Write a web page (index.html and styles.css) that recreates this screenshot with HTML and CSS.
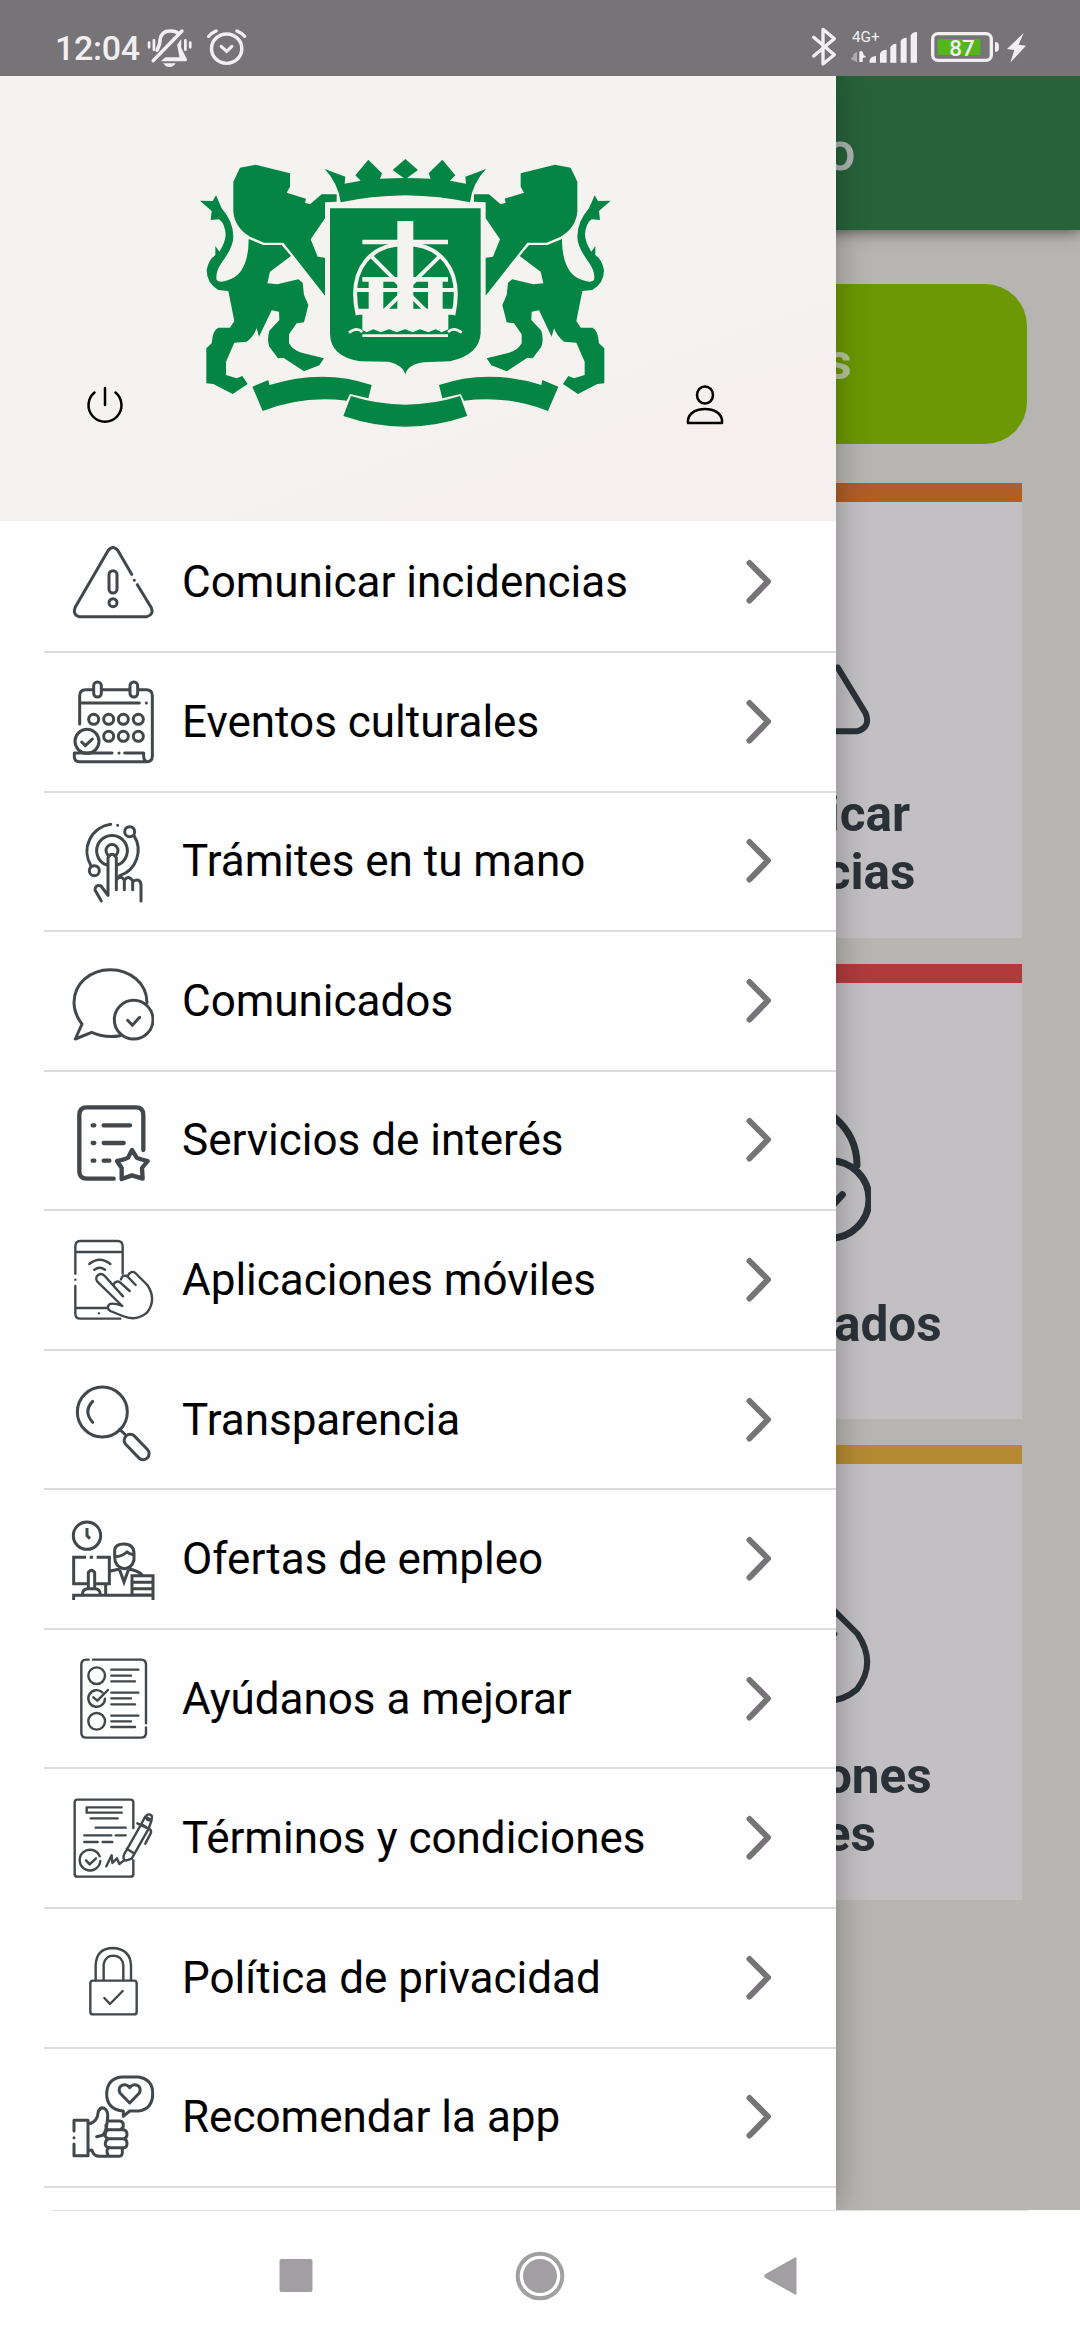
FILE: index.html
```html
<!DOCTYPE html>
<html lang="es">
<head>
<meta charset="utf-8">
<title>Menú</title>
<link rel="stylesheet" href="styles.css">
</head>
<body>
<svg class="defs" aria-hidden="true">
  <symbol id="i-warn" viewBox="95 63 246 246"><path d="M274 163L233 92Q218 73 203 92L105 261Q96 284 116 290H320Q341 284 333 263L291 194M282 181h.1"/><rect x="206" y="152" width="24" height="67" rx="12"/><circle cx="218" cy="248" r="12"/></symbol>
  <symbol id="i-chat" viewBox="95 118 246 246"><path d="M320 246C320 188 269 147 210 147S101 188 101 246Q102 281 125 310L105 355 154 335Q194 353 239 345"/><circle cx="280" cy="297" r="58"/><path d="M262 299l14 15 22-24"/></symbol>
  <symbol id="i-touch" viewBox="95 956 246 246"><path d="M105 1060V978Q105 962 120 962H232Q247 962 247 978V1060M105 995H247M105 1078h.1M105 1097V1180Q105 1195 120 1195H240M105 1163H200M176 1179h.1M147 1031Q178 1005 210 1031M162 1048Q178 1036 194 1048"/><path d="M246 1157L171 1084C160 1067 181 1053 194 1068L248 1128M220 1094L223 1087Q231 1080 240 1087L268 1112M242 1077Q246 1062 260 1067L286 1094M263 1065Q272 1049 285 1058L321 1094Q350 1138 320 1177Q288 1204 247 1187L210 1172Q197 1164 206 1153Q215 1145 246 1157"/></symbol>
</svg>
<div class="phone">
  <header class="status">
    <span class="clock">12:04</span>
    <svg class="st-bell" viewBox="428 80 133 126" preserveAspectRatio="none"><path d="M457 150Q466 132 466 117Q470 92 494 92Q511 91 519 100M446 181L529 92" fill="none" stroke="#f1eff1" stroke-width="10" stroke-linecap="round"/><path d="M434 127v14M448 120v28M539 120v28M553 127v14" stroke="#f1eff1" stroke-width="8" stroke-linecap="round"/><path d="M527 117V142L543 176Q545 183 538 183H468L481 171H522L515 133ZM475 189h36q-6 11-18 11t-18-11"/></svg>
    <svg class="st-alarm" viewBox="598 80 119 120" preserveAspectRatio="none" fill="none" stroke="#f1eff1" stroke-linecap="round"><circle cx="658" cy="145" r="44" stroke-width="10"/><path d="M606 108Q613 98 627 92M710 108Q702 98 688 92" stroke-width="10"/><path d="M642 138L658 153 673 138" stroke-width="9"/></svg>
    <svg class="st-right" viewBox="150 75 650 130">
      <path d="M158 112L220 164 186 192V88L220 116 158 168" fill="none" stroke="#f1eff1" stroke-width="10" stroke-linejoin="round" stroke-linecap="round"/>
      <text x="273" y="126" font-size="46">4G+</text>
      <path d="M288 155V187L270 178Q270 173 277 169V163Z" opacity=".45"/><path d="M295 155q10-6 13 10l8 6-11 3v12h-10zM325 188q0-19 20-20v20zM357 188v-27q5-12 20-12v39zM388 188v-46q5-11 18-11v57zM419 188v-65q5-10 18-10v75zM449 188v-82q5-10 19-10v92z"/>
      <rect x="515" y="101" width="176" height="80" rx="16" fill="none" stroke="#f1eff1" stroke-width="10"/><rect x="530" y="117" width="128" height="48" fill="#54b619"/><path d="M702 127h5q7 0 7 14t-7 14h-5zM788 99L738 147 760 150 748 188 795 137 773 134Z"/>
      <text x="565" y="167" font-size="67" font-weight="500">87</text>
    </svg>
  </header>
  <div class="stage">
    <main class="home">
      <div class="appbar"><span>o</span></div>
      <div class="cta"><span>s</span></div>
      <section class="tile orange"><svg class="ico"><use href="#i-warn"/></svg><p>Comunicar<br>incidencias</p></section>
      <section class="tile red"><svg class="ico"><use href="#i-chat"/></svg><p>Comunicados</p></section>
      <section class="tile amber"><svg class="ico"><use href="#i-touch"/></svg><p>Aplicaciones<br>móviles</p></section>
    </main>
    <aside class="drawer">
      <div class="head">
        <svg class="round" viewBox="0 0 40 40"><path d="M20 3V20M9.5 7.5A16.5 16.5 0 1 0 30.5 7.5"/></svg>
        <svg class="crest" viewBox="0 0 1290 900">
          <g id="half">
            <path d="M150 83L197 74 300 100V140L290 158 348 176 345 188 360 193 395 163H440V185L405 187V235L362 298 383 350 405 353V467L280 308H222L180 290Q134 262 130 215V125Z"/>
            <path d="M176 297L220 315H275L303 348 240 395 232 430 262 433 325 418 338 428 342 465 355 495 342 547 320 550 297 583V610Q310 632 335 638L402 655 388 676 342 694 280 653 264 655 238 620Q230 600 238 572L268 540 267 515 245 511 207 590 200 565Q190 590 170 605L133 608 108 665V705L140 715 157 708 173 732 128 762 70 732 49 730V625L65 610Q68 570 85 563H120L133 543 115 453 85 450Q50 430 50 390 55 360 76 345V318L88 335Q105 310 107 285 105 250 87 238L62 240 65 213 30 182 68 183 78 166 95 205Q130 245 130 290 130 320 97 365 75 395 80 420 88 430 115 420C158 408 176 360 176 297Z"/>
            <path d="M404 87L466 110 464 131 512 122 496 106 535 59 576 100 570 116Q608 114 647 114V166Q540 168 452 187 445 130 404 87Z"/>
            <path d="M187 740L235 720 238 735Q400 685 545 735L535 775 480 762 470 782Q340 765 218 813Z"/>
          </g>
          <use href="#half" transform="matrix(-1 0 0 1 1292 0)"/>
          <path d="M646 57L684 90 646 118 608 90ZM420 205H872V580Q868 645 780 664L700 667Q650 675 646 705 640 675 595 665L510 664Q420 650 420 580ZM483 768Q646 820 810 768L832 828Q646 892 460 828Z"/>
          <g fill="none" stroke="#f4f3ef"><path d="M503 525C470 380 550 312 646 312S822 380 790 525" stroke-width="12"/><path d="M517 306H774M517 418H774" stroke-width="14"/><path d="M500 450H795M545 350L740 545M748 350L550 545" stroke-width="12"/></g>
          <path d="M622 243H670V506H714V420H758V506H790V524H775V568L755 577 737 568 715 577 690 568 668 577 645 568 620 577 597 568 572 577 550 568 530 577 517 570V524H500V506H536V420H580V506H622Z" fill="#f4f3ef"/>
          <path d="M477 578Q500 560 517 576M815 578Q792 560 774 576M517 587H774" fill="none" stroke="#f4f3ef" stroke-width="8"/>
        </svg>
        <svg class="round" viewBox="0 0 40 40"><ellipse cx="20" cy="10" rx="8" ry="8.6"/><path d="M3 38V35C4 28 11 24 20 24S36 28 37 35V38Z"/></svg>
      </div>
      <nav class="menu">
        <a><svg class="ico"><use href="#i-warn"/></svg><span>Comunicar incidencias</span><svg class="chev" viewBox="0 0 30 46"><path d="M5.500 4L24 22.500 5.500 41.500"/></svg></a>
        <a><svg class="ico" viewBox="95 481 246 246"><path d="M118 610V525Q118 507 136 507H158M186 507H266M295 507H318Q336 507 336 525V706Q336 722 322 723M120 547H297M318 547h.1M135 697H215M236 697h.1M253 697H310V706Q310 722 322 723H117Q102 722 102 708V697H135"/><rect x="160" y="484" width="23" height="45" rx="11"/><rect x="269" y="484" width="23" height="45" rx="11"/><circle cx="160" cy="596" r="15"/><circle cx="205" cy="596" r="15"/><circle cx="249" cy="596" r="15"/><circle cx="294" cy="596" r="15"/><circle cx="205" cy="647" r="15"/><circle cx="249" cy="647" r="15"/><circle cx="294" cy="647" r="15"/><circle cx="140" cy="662" r="36"/><path d="M124 664l11 11 21-20"/></svg><span>Eventos culturales</span><svg class="chev" viewBox="0 0 30 46"><path d="M5.500 4L24 22.500 5.500 41.500"/></svg></a>
        <a><svg class="ico" viewBox="95 900 246 246"><path d="M211 913A82 82 0 0 0 152 1037M232 916h.1M281 947A81 81 0 0 1 238 1067M201 1036A46 46 0 1 1 229 1036M202 1004A18 18 0 1 1 228 1004M183 1143L164 1110Q165 1092 182 1098L203 1126V1013Q215 992 228 1013V1109M228 1080Q240 1063 252 1080V1109M252 1080Q265 1063 277 1083V1109M277 1085Q300 1072 302 1095V1143"/><circle cx="268" cy="935" r="15"/><circle cx="162" cy="1052" r="15"/></svg><span>Trámites en tu mano</span><svg class="chev" viewBox="0 0 30 46"><path d="M5.500 4L24 22.500 5.500 41.500"/></svg></a>
        <a><svg class="ico"><use href="#i-chat"/></svg><span>Comunicados</span><svg class="chev" viewBox="0 0 30 46"><path d="M5.500 4L24 22.500 5.500 41.500"/></svg></a>
        <a><svg class="ico thick" viewBox="95 537 246 246"><path d="M309 690V585Q309 562 287 562H139Q117 562 117 585V754Q117 776 139 776H220M157 616h5M190 616H269M157 669h5M190 669H250M157 722h5M190 722H207M275 690L289 713Q303 718 322 723L305 744 307 776 275 766 244 777V744L230 723Q252 719 263 713Z"/></svg><span>Servicios de interés</span><svg class="chev" viewBox="0 0 30 46"><path d="M5.500 4L24 22.500 5.500 41.500"/></svg></a>
        <a><svg class="ico thin"><use href="#i-touch"/></svg><span>Aplicaciones móviles</span><svg class="chev" viewBox="0 0 30 46"><path d="M5.500 4L24 22.500 5.500 41.500"/></svg></a>
        <a><svg class="ico" viewBox="95 115 246 246"><circle cx="186" cy="214" r="75"/><path d="M157 182Q128 212 157 245M238 266L256 283"/><rect x="-46" y="-18" width="92" height="36" rx="18" transform="translate(289 319) rotate(46)"/></svg><span>Transparencia</span><svg class="chev" viewBox="0 0 30 46"><path d="M5.500 4L24 22.500 5.500 41.500"/></svg></a>
        <a><svg class="ico sq" viewBox="95 534 246 246"><circle cx="140" cy="587" r="41"/><path d="M140 564V587L149 596M137 652H100V731H140M166 731H207V652H169M148 652h10M100 780V766H338V780M144 745V697Q153 684 163 697V745M126 764Q126 746 144 746H163Q180 746 180 764M196 765V733M207 694L238 687M265 687Q294 692 306 705M238 690L251 726 264 690M223 630Q225 612 251 612 280 612 281 640V660Q274 686 251 686 223 680 223 650V630M224 650Q245 650 260 636 270 644 280 644M275 707H338V765H275ZM275 727H338M275 746H338"/></svg><span>Ofertas de empleo</span><svg class="chev" viewBox="0 0 30 46"><path d="M5.500 4L24 22.500 5.500 41.500"/></svg></a>
        <a><svg class="ico thin" viewBox="95 954 246 246"><path d="M145 959H138Q123 959 123 974V1178Q123 1193 138 1193H302Q317 1193 317 1178V1162M317 1150V974Q317 959 302 959H158M213 989H294M213 1007H272M213 1024H284M213 1058H294M213 1075H272M213 1093H284M213 1127H294M213 1144H272M213 1161H284M186 1057A25 25 0 1 0 194 1076M159 1072L171 1082 203 1050"/><circle cx="169" cy="1007" r="25"/><circle cx="169" cy="1144" r="25"/></svg><span>Ayúdanos a mejorar</span><svg class="chev" viewBox="0 0 30 46"><path d="M5.500 4L24 22.500 5.500 41.500"/></svg></a>
        <a><svg class="ico thin" viewBox="95 112 246 246"><path d="M279 205V127Q278 120 271 120H111Q103 120 103 128V343Q103 351 111 351H271Q279 351 279 343V302M244 143H139V159H244M151 176H232M166 204H256M132 227H213M226 227H256M132 247H172M187 247H216M178 290A31 31 0 1 0 180 304M137 302L148 314 167 296M198 320L214 287 216 310 230 296 237 313 251 302M251 285L303 193 325 207 274 297 257 303Q246 300 251 285ZM259 267L281 281M291 191L330 210Q335 217 329 225L315 252M303 193L314 171 334 181 325 207"/><circle cx="326" cy="173" r="9"/></svg><span>Términos y condiciones</span><svg class="chev" viewBox="0 0 30 46"><path d="M5.500 4L24 22.500 5.500 41.500"/></svg></a>
        <a><svg class="ico thin" viewBox="95 531 246 246"><rect x="150" y="662" width="139" height="101" rx="8"/><path d="M166 661V616Q168 564 219 564 270 568 272 616V661M190 661V613Q195 587 219 587 246 588 249 616V661M192 714L209 732 247 693"/></svg><span>Política de privacidad</span><svg class="chev" viewBox="0 0 30 46"><path d="M5.500 4L24 22.500 5.500 41.500"/></svg></a>
        <a><svg class="ico" viewBox="95 950 246 246"><path d="M244 953H294Q338 960 337 1003 337 1048 295 1055H268L249 1071V1055Q199 1050 199 1003 201 957 244 953ZM268 1031L239 1001C228 979 256 967 268 985 280 967 308 979 297 1001ZM101 1115V1083H143V1189H101V1154M101 1135h.1M145 1094Q172 1088 174 1056 181 1042 192 1047 206 1054 201 1084 198 1118 187 1128L169 1132M145 1173H155Q160 1191 178 1191H236Q248 1190 246 1173M207 1085H238Q249 1086 249 1098T238 1111H205Q195 1110 197 1097M205 1111H248Q260 1112 260 1125T248 1138H206Q192 1136 195 1123T205 1111M206 1138H250Q260 1140 260 1153T248 1165H206Q193 1163 195 1151T206 1138M207 1165Q195 1170 203 1187M246 1165V1175"/></svg><span>Recomendar la app</span><svg class="chev" viewBox="0 0 30 46"><path d="M5.500 4L24 22.500 5.500 41.500"/></svg></a>
      </nav>
    </aside>
  </div>
  <footer class="nav">
    <svg viewBox="0 0 50 50"><rect x="8.500" y="8" width="33" height="33" rx="2"/></svg>
    <svg viewBox="0 0 50 50"><circle cx="25" cy="25" r="22.3" fill="none" stroke="#a19fa2" stroke-width="4"/><circle cx="25" cy="25" r="17"/></svg>
    <svg viewBox="0 0 50 50"><path d="M37.500 7.500Q37.500 5.500 36 6.500L6.500 23Q4 25 6.500 27L36 43.500Q37.500 44.500 37.500 42.500Z"/></svg>
  </footer>
</div>
</body>
</html>
```
FILE: styles.css
```css
* { box-sizing: border-box; }
body { margin: 0; font-family: Roboto, "Liberation Sans", sans-serif; }
svg { display: block; flex: none; }
.defs { position: absolute; width: 0; height: 0; }
.phone { width: 1080px; height: 2340px; display: flex; flex-direction: column; background: #fefefe; overflow: hidden; }

.status { height: 76px; flex: none; display: flex; align-items: flex-start; padding: 25px 0 0 55px; background: #777478; color: #f1eff1; fill: #f1eff1; }
.clock { width: 92px; font-size: 34px; font-weight: 500; line-height: 46px; letter-spacing: -.3px; }
.st-bell { width: 46px; height: 42px; margin-top: 2px; }
.st-alarm { width: 41px; height: 40px; margin: 2px 0 0 13px; }
.st-right { width: 216.670px; height: 43.330px; margin-left: 563.500px; }

.stage { height: 2134px; flex: none; display: grid; overflow: hidden; }
.home, .drawer { grid-area: 1 / 1; }
.home { display: flex; flex-direction: column; align-items: flex-end; background: #b6b5b1; }
.appbar { width: 100%; height: 154px; padding: 44px 0 0 825px; background: #27623a; color: #adb4ae; font-size: 54px; font-weight: 500; line-height: 64px; box-shadow: 0 2px 14px rgba(0,0,0,.55); }
.cta { width: 974px; height: 160px; margin: 54px 53px 39px 0; padding: 49px 0 0 773px; border-radius: 42px; background: #6b9803; color: #b6c59b; font-size: 50px; font-weight: 700; line-height: 58px; }
.tile { width: 467px; height: 455px; margin: 0 58px 26px 0; padding-top: 78px; display: flex; flex-direction: column; align-items: center; background: #c2c0c2; border-top: 19px solid; color: #2b3237; }
.tile .ico { width: 164px; height: 164px; stroke: #2b3237; }
.tile p { margin: 40.500px 0 0 1px; font-size: 49.500px; font-weight: 700; line-height: 58px; text-align: center; }
.orange { border-color: #b05e26; }
.red { border-color: #b03b3d; padding-top: 97px; }
.red .ico { stroke-width: 10.500; }
.red p { margin-top: 50.500px; }
.amber { border-color: #b48b32; }

.ico { width: 82px; height: 82px; fill: none; stroke: #42474b; stroke-width: 9; stroke-linecap: round; stroke-linejoin: round; overflow: visible; }
.thin { stroke-width: 7.200; }
.thick { stroke-width: 13; }
.sq { stroke-linecap: butt; stroke-linejoin: miter; }

.drawer { width: 836px; z-index: 1; display: flex; flex-direction: column; background: #fefefe; box-shadow: 0 0 32px rgba(0,0,0,.3); }
.head { height: 445px; flex: none; z-index: 1; display: flex; align-items: flex-end; padding-left: 84.500px; background: linear-gradient(160deg, #f4f3ef 55%, #f5f0ef 80%); }
.round { width: 40px; height: 40px; margin-bottom: 96px; fill: none; stroke: #000; stroke-width: 2.500; stroke-linecap: round; stroke-linejoin: round; }
.crest { width: 430px; height: 300px; margin: 0 64.500px 81px 65.500px; fill: #048543; }
.menu { margin: -7.500px 0 0 44px; display: flex; flex-direction: column; }
.menu a { height: 139.550px; flex: none; display: flex; align-items: center; padding: 0 62px 0 28px; border-bottom: 2px solid #dcdcdc; color: #000; font-size: 44px; }
.menu span { flex: 1; margin: 0 0 0 28px; white-space: nowrap; }
.chev { width: 30px; height: 46px; fill: none; stroke: #777478; stroke-width: 6; stroke-linecap: round; stroke-linejoin: round; }

.nav { height: 130px; flex: none; margin: 0 52px; display: flex; justify-content: space-between; align-items: center; padding: 0 219px; border-top: 1px solid #dedede; fill: #a19fa2; }
.nav svg { width: 50px; height: 50px; }
```
